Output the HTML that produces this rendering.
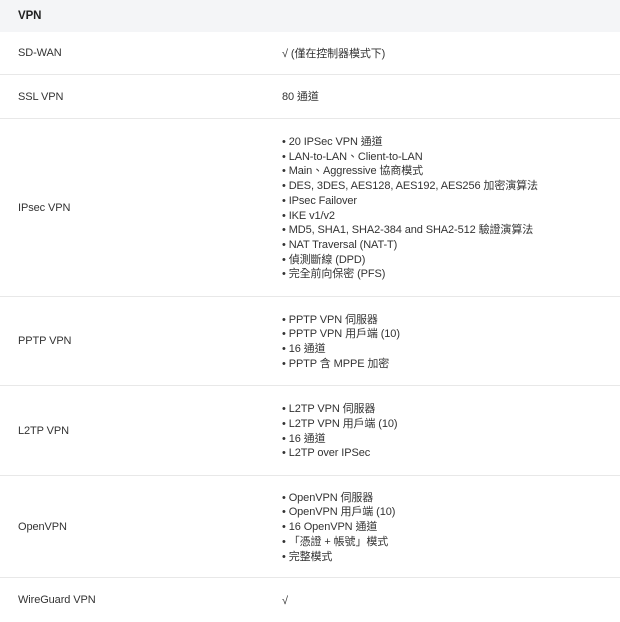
<!DOCTYPE html>
<html><head><meta charset="utf-8"><style>
*{margin:0;padding:0;box-sizing:border-box}
body{width:620px;height:620px;overflow:hidden;background:#fff;font-family:"Liberation Sans","Noto Sans CJK TC",sans-serif;font-size:11px;color:#333;letter-spacing:-0.1px}
.hd{height:32px;background:#f4f5f7;padding-left:18px;line-height:32px;font-weight:bold;font-size:11.5px;color:#222}
.r{display:flex;align-items:center;border-bottom:1px solid #e8e8e8;position:relative}
.l{position:absolute;left:18px}
.v{margin-left:282px;line-height:14.7px;padding-top:2px}
</style></head><body>
<div class="hd">VPN</div>
<div class="r" style="height:43px"><div class="l">SD-WAN</div><div class="v">√ (僅在控制器模式下)</div></div>
<div class="r" style="height:44px"><div class="l">SSL VPN</div><div class="v">80 通道</div></div>
<div class="r" style="height:178px"><div class="l">IPsec VPN</div><div class="v">• 20 IPSec VPN 通道<br>• LAN-to-LAN、Client-to-LAN<br>• Main、Aggressive 協商模式<br>• DES, 3DES, AES128, AES192, AES256 加密演算法<br>• IPsec Failover<br>• IKE v1/v2<br>• MD5, SHA1, SHA2-384 and SHA2-512 驗證演算法<br>• NAT Traversal (NAT-T)<br>• 偵測斷線 (DPD)<br>• 完全前向保密 (PFS)</div></div>
<div class="r" style="height:89px"><div class="l">PPTP VPN</div><div class="v">• PPTP VPN 伺服器<br>• PPTP VPN 用戶端 (10)<br>• 16 通道<br>• PPTP 含 MPPE 加密</div></div>
<div class="r" style="height:90px"><div class="l">L2TP VPN</div><div class="v">• L2TP VPN 伺服器<br>• L2TP VPN 用戶端 (10)<br>• 16 通道<br>• L2TP over IPSec</div></div>
<div class="r" style="height:102px"><div class="l">OpenVPN</div><div class="v">• OpenVPN 伺服器<br>• OpenVPN 用戶端 (10)<br>• 16 OpenVPN 通道<br>• 「憑證 + 帳號」模式<br>• 完整模式</div></div>
<div class="r" style="height:44px;border:none"><div class="l">WireGuard VPN</div><div class="v">√</div></div>
</body></html>
